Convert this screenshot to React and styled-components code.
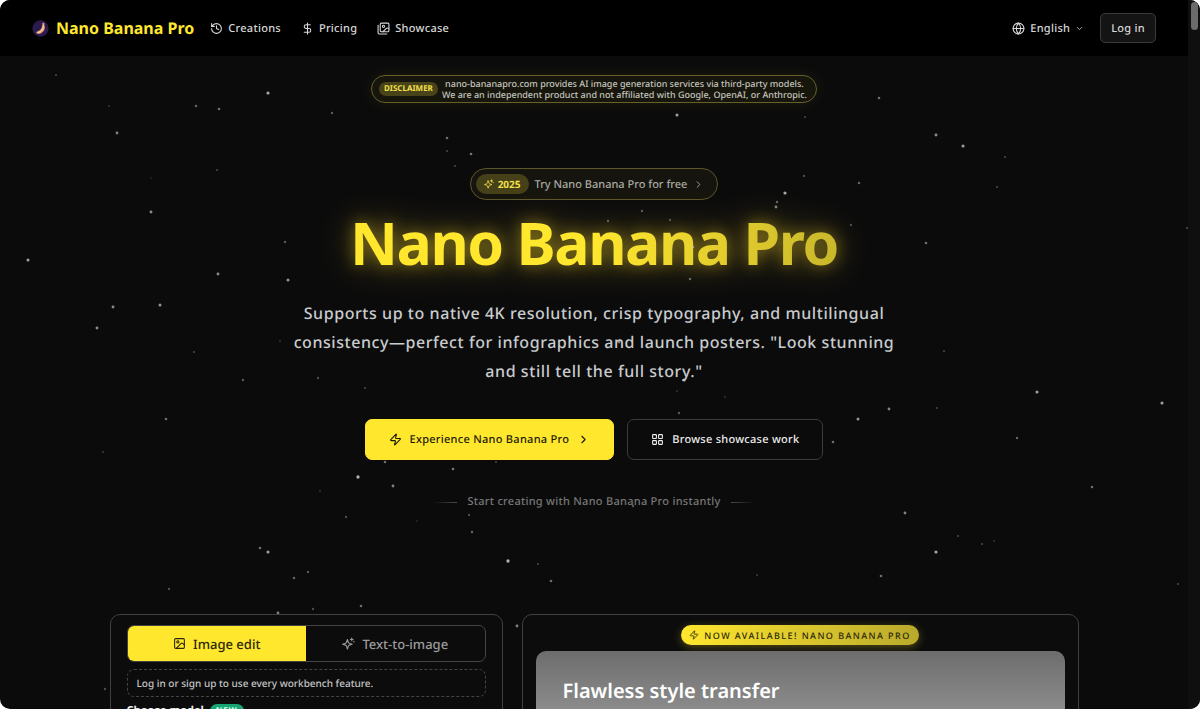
import React from 'react'
import styled, { createGlobalStyle } from 'styled-components'
import {
  ChevronDown,
  ChevronRight,
  DollarSign,
  Globe,
  History,
  Image,
  LayoutGrid,
  Zap
} from 'lucide-react'

const GlobalStyle = createGlobalStyle`
  * {
    box-sizing: border-box;
  }

  body {
    margin: 0;
    background: #ffffff;
    font-family: "Noto Sans", "Open Sans", sans-serif;
    font-weight: 500;
    color: #d4d4d4;
    text-rendering: geometricPrecision;
  }

  button {
    font: inherit;
    text-rendering: inherit;
    cursor: pointer;
  }

  a {
    color: inherit;
    text-decoration: none;
  }
`

const Window = styled.div`
  position: relative;
  display: grid;
  grid-template-columns: 1fr 12px;
  height: 100vh;
  overflow: hidden;
  border-radius: 10px;
  background: #0b0b0c;
`

const Page = styled.div`
  position: relative;
  min-width: 0;
`

const ScrollTrack = styled.div`
  padding: 2px 2px 2px 3px;
  background: #0f0f0f;
`

const ScrollThumb = styled.div`
  height: 28px;
  border-radius: 4px;
  background: #6b6b6b;
`

const Header = styled.header`
  display: flex;
  align-items: center;
  justify-content: space-between;
  height: 56px;
  padding: 0 32px;
  background: #000000;
`

const HeaderGroup = styled.div`
  display: flex;
  align-items: center;
  gap: ${props => props.$gap};
`

const Brand = styled.a`
  display: flex;
  align-items: center;
  gap: 7px;
  color: #ffe72e;
  font-size: 16px;
  font-weight: 700;
`

const NavLink = styled.a`
  display: flex;
  align-items: center;
  gap: 5px;
  font-size: 11px;
  letter-spacing: 0.025em;
  color: #d8d8d8;
`

const LanguageButton = styled.button`
  display: flex;
  align-items: center;
  gap: 5px;
  padding: 0;
  border: 0;
  background: none;
  color: #d8d8d8;
  font-size: 11px;
  letter-spacing: 0.025em;
`

const LoginButton = styled.button`
  height: 30px;
  padding: 0 10px;
  border: 1px solid #3a3a3a;
  border-radius: 5px;
  background: #141414;
  color: #d8d8d8;
  font-size: 11px;
  letter-spacing: 0.025em;
`

const Hero = styled.main`
  display: flex;
  flex-direction: column;
  align-items: center;
  padding: 19px 24px 0;
`

const Disclaimer = styled.div`
  display: flex;
  align-items: center;
  gap: 4px;
  height: 28px;
  padding: 0 9px 0 7px;
  border: 1px solid #66602a;
  border-radius: 14px;
  background: #17160d;
  box-shadow: 0 0 16px rgba(255, 231, 46, 0.08);
`

const DisclaimerTag = styled.strong`
  padding: 0 5px;
  border-radius: 7px;
  background: #49431a;
  color: #f4e04a;
  font-size: 8px;
  line-height: 14px;
  font-weight: 700;
`

const DisclaimerText = styled.p`
  margin: 0;
  color: #c4c4bf;
  font-size: 9px;
  line-height: 11px;
  text-align: center;
`

const TryLink = styled.a`
  display: flex;
  align-items: center;
  gap: 6px;
  height: 32px;
  margin-top: 65px;
  padding: 0 13px 0 5px;
  border: 1px solid #5c5728;
  border-radius: 16px;
  background: #15140e;
  color: #aaa9a2;
  font-size: 11px;
`

const YearTag = styled.span`
  display: flex;
  align-items: center;
  gap: 4px;
  height: 20px;
  padding: 0 8px;
  border-radius: 10px;
  background: #454018;
  color: #f4e04a;
  font-size: 10px;
  font-weight: 700;
`

const Title = styled.h1`
  margin: 13px 0 0;
  background: linear-gradient(90deg, #ffe72e 50%, #c9b72c);
  background-clip: text;
  color: transparent;
  font-size: 59px;
  line-height: 60px;
  font-weight: 700;
  letter-spacing: -0.025em;
  filter: drop-shadow(0 0 8px rgba(255, 220, 40, 0.45)) drop-shadow(0 0 18px rgba(255, 220, 40, 0.3));
`

const Lead = styled.p`
  max-width: 620px;
  margin: 26px 0 0;
  color: #c9cbcd;
  font-size: 16px;
  line-height: 29px;
  letter-spacing: 0.035em;
  text-align: center;
`

const Actions = styled.div`
  position: relative;
  z-index: 2;
  display: flex;
  gap: 13px;
  margin-top: 33px;
`

const ActionLink = styled.a`
  display: flex;
  align-items: center;
  gap: 8px;
  height: 41px;
  padding: 0 23px;
  border: 1px solid ${props => (props.$primary ? '#ffe72e' : '#3c3c3c')};
  border-radius: 7px;
  background: ${props => (props.$primary ? '#ffe72e' : '#0b0b0c')};
  color: ${props => (props.$primary ? '#1d1a05' : '#eeeeee')};
  font-size: 11px;
  letter-spacing: 0.025em;
`

const Hint = styled.p`
  display: flex;
  align-items: center;
  gap: 10px;
  margin: 33px 0 0;
  color: #777777;
  font-size: 11px;
  line-height: 18px;
  letter-spacing: 0.025em;
`

const HintLine = styled.span`
  width: 24px;
  height: 1px;
  background: linear-gradient(${props => props.$to}, transparent, #4a4a4a);
`

const Panels = styled.div`
  position: relative;
  z-index: 2;
  display: grid;
  grid-template-columns: 393fr 557fr;
  gap: 19px;
  width: 100%;
  max-width: 969px;
  margin-top: 103px;
`

const Panel = styled.section`
  display: flex;
  flex-direction: column;
  min-width: 0;
  padding: ${props => props.$padding};
  border: 1px solid #404040;
  border-radius: 10px;
  background: #0c0c0c;
`

const Tabs = styled.div`
  display: grid;
  grid-template-columns: 1fr 1fr;
  height: 37px;
  overflow: hidden;
  border: 1px solid #444444;
  border-radius: 7px;
`

const Tab = styled.button`
  display: flex;
  align-items: center;
  justify-content: center;
  gap: 7px;
  padding: 0;
  border: 0;
  background: ${props => (props['aria-selected'] ? '#ffe72e' : 'transparent')};
  color: ${props => (props['aria-selected'] ? '#2b270a' : '#9b9b9b')};
  font-size: 13px;
`

const Notice = styled.p`
  margin: 7px 0;
  padding: 0 9px;
  border: 1px dashed #444444;
  border-radius: 7px;
  color: #c4c4c4;
  font-size: 10px;
  line-height: 26px;
`

const FieldTitle = styled.h2`
  display: flex;
  align-items: center;
  gap: 6px;
  margin: 0;
  color: #eeeeee;
  font-size: 11px;
  line-height: 14px;
  font-weight: 700;
`

const NewTag = styled.span`
  padding: 0 6px;
  border-radius: 7px;
  background: #17a673;
  color: #d9fff0;
  font-size: 8px;
  line-height: 14px;
  letter-spacing: 1px;
`

const ReleaseTag = styled.div`
  display: flex;
  align-items: center;
  align-self: center;
  gap: 5px;
  height: 20px;
  padding: 0 8px;
  border-radius: 10px;
  background: linear-gradient(90deg, #ffe72e, #b9a92c);
  box-shadow: 0 2px 8px rgba(255, 231, 46, 0.3);
  color: #2b270a;
  font-size: 9px;
  letter-spacing: 0.16em;
`

const Showcase = styled.article`
  height: 400px;
  margin-top: 6px;
  padding: 27px;
  border-radius: 10px;
  background: linear-gradient(#6c6d6c, #8a8b8a 58px, #b0b0b0);
`

const ShowcaseTitle = styled.h3`
  margin: 0;
  color: #ffffff;
  font-size: 20px;
  line-height: 26px;
  font-weight: 600;
`

// Sky is a free canvas: it sits over the hero text and lets clicks through
const Sky = styled.svg`
  position: absolute;
  z-index: 1;
  top: 0;
  left: 0;
  width: 100%;
  height: 100%;
  pointer-events: none;
`

// x, y, brightness
const STARS = [
  [56, 75, 0.3], [109, 106, 0.2], [268, 93, 0.8], [196, 106, 0.45], [219, 109, 0.5],
  [332, 113, 0.4], [117, 133, 0.6], [217, 170, 0.3], [151, 178, 0.15], [151, 212, 0.65],
  [28, 260, 0.75], [285, 242, 0.4], [218, 274, 0.65], [288, 280, 0.7], [113, 307, 0.65],
  [160, 305, 0.7], [97, 328, 0.65], [280, 341, 0.2], [194, 352, 0.3], [243, 380, 0.4],
  [318, 378, 0.35], [365, 388, 0.3], [166, 419, 0.5], [103, 452, 0.25], [385, 462, 0.5],
  [453, 469, 0.55], [496, 462, 0.3], [358, 477, 0.85], [393, 486, 0.6], [320, 491, 0.2],
  [346, 517, 0.35], [417, 521, 0.15], [469, 515, 0.35], [472, 532, 0.45], [260, 548, 0.5],
  [268, 552, 0.75], [308, 572, 0.4], [294, 578, 0.45], [169, 589, 0.35], [508, 561, 0.85],
  [538, 564, 0.3], [551, 581, 0.5], [361, 606, 0.5], [313, 609, 0.35], [278, 613, 0.6],
  [684, 380, 0.8], [677, 391, 0.2], [725, 397, 0.2], [679, 413, 0.4], [889, 409, 0.6],
  [937, 408, 0.3], [858, 419, 0.7], [833, 442, 0.5], [1037, 392, 0.75], [1162, 403, 0.75],
  [1017, 438, 0.45], [1092, 487, 0.5], [905, 513, 0.6], [958, 536, 0.3], [982, 544, 0.3],
  [994, 541, 0.2], [936, 552, 0.8], [757, 575, 0.25], [881, 576, 0.5], [1178, 584, 0.3],
  [633, 506, 0.4], [879, 98, 0.5], [805, 117, 0.3], [936, 135, 0.65], [963, 146, 0.75],
  [1005, 157, 0.3], [997, 187, 0.3], [804, 176, 0.35], [859, 183, 0.45], [851, 225, 0.35],
  [926, 243, 0.5], [944, 351, 0.3], [677, 115, 0.75], [447, 138, 0.5], [447, 151, 0.3],
  [471, 154, 0.55], [455, 166, 0.3], [785, 193, 0.8], [777, 202, 0.45], [776, 207, 0.6],
  [642, 211, 0.4], [608, 221, 0.4], [670, 220, 0.35], [690, 279, 0.45], [693, 247, 0.5],
  [619, 342, 0.6], [517, 626, 0.6], [105, 689, 0.35], [1187, 228, 0.3]
]

function StarField() {
  return (
    <Sky aria-hidden="true">
      {STARS.map(([x, y, light]) => (
        <circle
          key={`${x}-${y}`}
          cx={x}
          cy={y}
          r={0.8 + light}
          fill="#d0d0d0"
          opacity={light}
        />
      ))}
    </Sky>
  )
}

function BananaLogo() {
  return (
    <svg width="17" height="17" viewBox="0 0 24 24" aria-hidden="true">
      <circle cx="12" cy="12" r="11.5" fill="#2b1b4d" />
      <path d="M15.4 4.2l1.7.6-.2 2.6c1.6 3.8.2 8.5-3.8 10.6-2.2 1.2-4.9 1.2-6.4.2l.1-1.3c4.8-1.2 8-4.5 8.3-10z" fill="#f0a87c" stroke="#f0a87c" />
      <path d="M16 8c.2 4.5-3 8.3-7.5 9.7" fill="none" stroke="#ffe0a0" strokeWidth="1.2" />
    </svg>
  )
}

function OutlineIcon({ size, children }) {
  return (
    <svg width={size} height={size} viewBox="0 0 24 24" fill="none" stroke="currentColor" strokeWidth="2" strokeLinecap="round" strokeLinejoin="round" aria-hidden="true">
      {children}
    </svg>
  )
}

function GalleryIcon() {
  return (
    <OutlineIcon size={13}>
      <path d="M18 22H4a2 2 0 0 1-2-2V6" />
      <path d="m22 13-1.3-1.3a2.4 2.4 0 0 0-3.4 0L11 18" />
      <circle cx="12" cy="8" r="2" />
      <rect width="16" height="16" x="6" y="2" rx="2" />
    </OutlineIcon>
  )
}

function SparkIcon({ size }) {
  return (
    <OutlineIcon size={size}>
      <path d="M10 4.5l1.7 5.2a3 3 0 0 0 1.9 1.9l5.2 1.7-5.2 1.7a3 3 0 0 0-1.9 1.9L10 22.1l-1.7-5.2a3 3 0 0 0-1.9-1.9l-5.2-1.7 5.2-1.7a3 3 0 0 0 1.9-1.9z" />
      <path d="M18 2v5" />
      <path d="M15.5 4.5h5" />
      <path d="M22 8v1" />
    </OutlineIcon>
  )
}

function SiteHeader() {
  return (
    <Header>
      <HeaderGroup $gap="16px">
        <Brand href="#home">
          <BananaLogo />
          Nano Banana Pro
        </Brand>
        <HeaderGroup as="nav" $gap="20px">
          <NavLink href="#creations">
            <History size={13} />
            Creations
          </NavLink>
          <NavLink href="#pricing">
            <DollarSign size={13} />
            Pricing
          </NavLink>
          <NavLink href="#showcase">
            <GalleryIcon />
            Showcase
          </NavLink>
        </HeaderGroup>
      </HeaderGroup>
      <HeaderGroup $gap="16px">
        <LanguageButton>
          <Globe size={13} />
          English
          <ChevronDown size={9} />
        </LanguageButton>
        <LoginButton>Log in</LoginButton>
      </HeaderGroup>
    </Header>
  )
}

function Workbench() {
  return (
    <Panel $padding="10px 16px 0">
      <Tabs role="tablist">
        <Tab role="tab" aria-selected={true}>
          <Image size={13} />
          Image edit
        </Tab>
        <Tab role="tab" aria-selected={false}>
          <SparkIcon size={13} />
          Text-to-image
        </Tab>
      </Tabs>
      <Notice>Log in or sign up to use every workbench feature.</Notice>
      <FieldTitle>
        Choose model
        <NewTag>NEW</NewTag>
      </FieldTitle>
    </Panel>
  )
}

function Release() {
  return (
    <Panel $padding="10px 13px 0">
      <ReleaseTag>
        <Zap size={10} />
        NOW AVAILABLE! NANO BANANA PRO
      </ReleaseTag>
      <Showcase>
        <ShowcaseTitle>Flawless style transfer</ShowcaseTitle>
      </Showcase>
    </Panel>
  )
}

export default function App() {
  return (
    <>
      <GlobalStyle />
      <Window>
        <Page>
          <SiteHeader />
          <StarField />
          <Hero>
            <Disclaimer>
              <DisclaimerTag>DISCLAIMER</DisclaimerTag>
              <DisclaimerText>
                nano-bananapro.com provides AI image generation services via third-party models.
                <br />
                We are an independent product and not affiliated with Google, OpenAI, or Anthropic.
              </DisclaimerText>
            </Disclaimer>
            <TryLink href="#try">
              <YearTag>
                <SparkIcon size={10} />
                2025
              </YearTag>
              Try Nano Banana Pro for free
              <ChevronRight size={11} />
            </TryLink>
            <Title>Nano Banana Pro</Title>
            <Lead>
              Supports up to native 4K resolution, crisp typography, and multilingual
              consistency—perfect for infographics and launch posters. "Look stunning
              and still tell the full story."
            </Lead>
            <Actions>
              <ActionLink $primary href="#workbench">
                <Zap size={13} />
                Experience Nano Banana Pro
                <ChevronRight size={13} />
              </ActionLink>
              <ActionLink href="#gallery">
                <LayoutGrid size={13} />
                Browse showcase work
              </ActionLink>
            </Actions>
            <Hint>
              <HintLine $to="to right" />
              Start creating with Nano Banana Pro instantly
              <HintLine $to="to left" />
            </Hint>
            <Panels>
              <Workbench />
              <Release />
            </Panels>
          </Hero>
        </Page>
        <ScrollTrack>
          <ScrollThumb />
        </ScrollTrack>
      </Window>
    </>
  )
}
